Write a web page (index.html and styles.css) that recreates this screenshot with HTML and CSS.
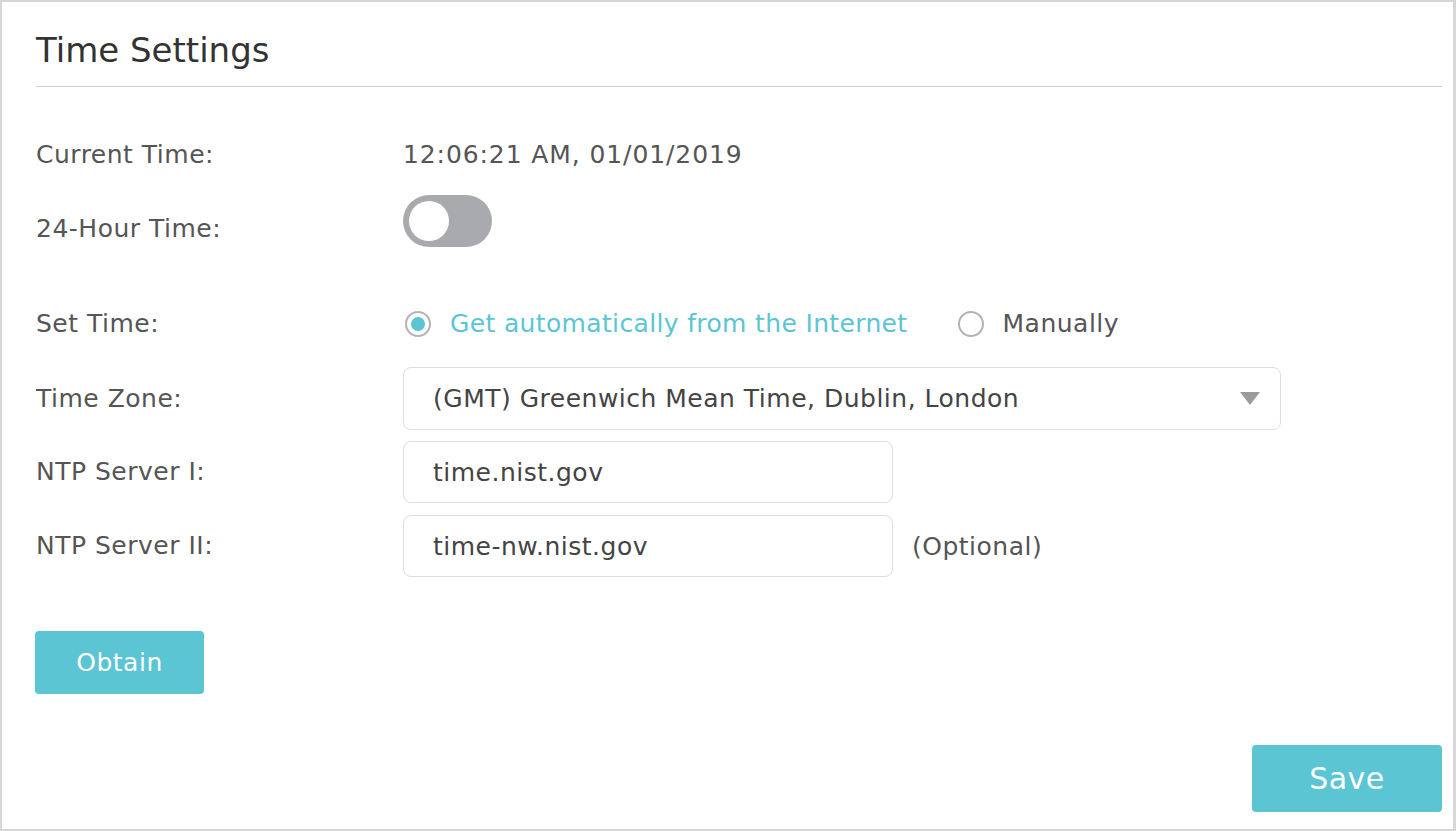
FILE: index.html
```html
<!DOCTYPE html>
<html>
<head>
<meta charset="utf-8">
<link rel="stylesheet" href="styles.css">
</head>
<body>
<div class="frame">
  <div class="panel">
    <h1 class="title">Time Settings</h1>
    <div class="form">
      <div class="row row-current">
        <div class="label">Current Time:</div>
        <div class="value">12:06:21 AM, 01/01/2019</div>
      </div>
      <div class="row row-toggle">
        <div class="label label-toggle">24-Hour Time:</div>
        <div class="toggle"><span class="knob"></span></div>
      </div>
      <div class="row row-settime">
        <div class="label">Set Time:</div>
        <div class="radios">
          <div class="radio checked"><span class="circle"><span class="dot"></span></span><span class="rtext">Get automatically from the Internet</span></div>
          <div class="radio"><span class="circle"></span><span class="rtext">Manually</span></div>
        </div>
      </div>
      <div class="row row-zone">
        <div class="label">Time Zone:</div>
        <div class="select">
          <span class="seltext">(GMT) Greenwich Mean Time, Dublin, London</span>
          <svg class="arrow" width="20" height="13" viewBox="0 0 20 13"><polygon points="0,0 20,0 10,13" fill="#9b9b9e"/></svg>
        </div>
      </div>
      <div class="row row-ntp1">
        <div class="label">NTP Server I:</div>
        <div class="input">time.nist.gov</div>
      </div>
      <div class="row row-ntp2">
        <div class="label">NTP Server II:</div>
        <div class="input">time-nw.nist.gov</div>
        <div class="hint">(Optional)</div>
      </div>
      <div class="row row-obtain">
        <button class="btn btn-obtain">Obtain</button>
      </div>
    </div>
    <div class="footer">
      <button class="btn btn-save">Save</button>
    </div>
  </div>
</div>
</body>
</html>
```
FILE: styles.css
```css
html, body {
  margin: 0;
  padding: 0;
  background: #ffffff;
}
body {
  font-family: "DejaVu Sans", Verdana, sans-serif;
  color: #555555;
  letter-spacing: 0.5px;
}
.frame {
  width: 1456px;
  height: 831px;
  box-sizing: border-box;
  border: 2px solid #d6d6d6;
  border-right-width: 3px;
  border-bottom-width: 2px;
}
.panel {
  padding: 0 11px 0 34px;
}
.title {
  margin: 0;
  padding-top: 28px;
  height: 85px;
  box-sizing: border-box;
  font-weight: normal;
  font-size: 34px;
  line-height: 40px;
  letter-spacing: 0;
  color: #333333;
  border-bottom: 1px solid #cfcfcf;
}
.form {
  display: flex;
  flex-direction: column;
}
.row {
  display: flex;
  align-items: center;
}
.label {
  width: 367px;
  flex: none;
  font-size: 25px;
  line-height: 30px;
  color: #555555;
}
.value {
  font-size: 25px;
  line-height: 30px;
  color: #555555;
  letter-spacing: 0.9px;
}
.row-current {
  margin-top: 48px;
  height: 40px;
}
.row-toggle {
  margin-top: 20px;
  height: 52px;
  align-items: flex-start;
}
.label-toggle {
  margin-top: 19px;
}
.toggle {
  width: 89px;
  height: 52px;
  border-radius: 26px;
  background: #a9aaad;
  position: relative;
  flex: none;
}
.knob {
  position: absolute;
  left: 6px;
  top: 6px;
  width: 40px;
  height: 40px;
  border-radius: 50%;
  background: #ffffff;
}
.row-settime {
  margin-top: 57px;
  height: 40px;
}
.radios {
  display: flex;
  align-items: center;
  padding-left: 2px;
}
.radio {
  display: flex;
  align-items: center;
  margin-right: 50px;
  font-size: 25px;
  line-height: 30px;
  color: #555555;
}
.radio.checked {
  color: #5bc5d3;
  letter-spacing: 0.35px;
}
.circle {
  width: 22px;
  height: 22px;
  border: 2px solid #b3b3b6;
  border-radius: 50%;
  display: flex;
  align-items: center;
  justify-content: center;
  margin-right: 19px;
  flex: none;
}
.dot {
  width: 14px;
  height: 14px;
  border-radius: 50%;
  background: #5bc5d3;
}
.row-zone {
  margin-top: 23px;
}
.select {
  width: 878px;
  height: 63px;
  box-sizing: border-box;
  border: 1px solid #dedede;
  border-radius: 8px;
  display: flex;
  align-items: center;
  justify-content: space-between;
  padding: 0 20px 0 29px;
  font-size: 25px;
  color: #444444;
}
.input {
  width: 490px;
  height: 62px;
  box-sizing: border-box;
  border: 1px solid #dedede;
  border-radius: 8px;
  display: flex;
  align-items: center;
  padding-left: 29px;
  font-size: 25px;
  color: #444444;
}
.row-ntp1 {
  margin-top: 11px;
}
.row-ntp2 {
  margin-top: 12px;
}
.hint {
  margin-left: 19px;
  font-size: 25px;
  color: #555555;
}
.row-obtain {
  margin-top: 54px;
}
.btn {
  border: none;
  border-radius: 4px;
  background: #5bc5d3;
  color: #ffffff;
  font-family: "DejaVu Sans", Verdana, sans-serif;
  letter-spacing: 0.5px;
  cursor: pointer;
  padding: 0;
}
.btn-obtain {
  width: 169px;
  height: 63px;
  font-size: 25px;
  margin-left: -1px;
}
.footer {
  display: flex;
  justify-content: flex-end;
  margin-top: 51px;
}
.btn-save {
  width: 190px;
  height: 67px;
  font-size: 30px;
}
```
